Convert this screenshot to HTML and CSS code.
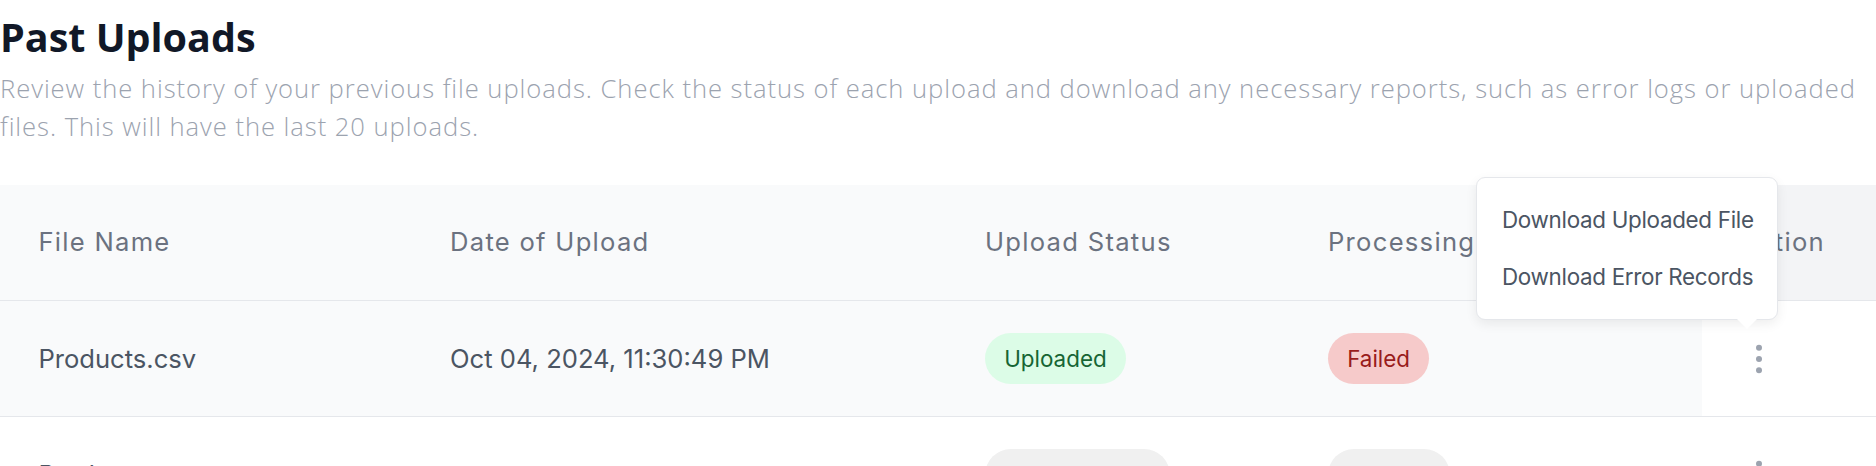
FILE: index.html
```html
<!DOCTYPE html>
<html lang="en">

<head>
    <meta charset="UTF-8">
    <meta name="viewport" content="width=device-width, initial-scale=1.0">
    <title>Past Uploads</title>
    <link rel="stylesheet" href="styles.css">
</head>

<body>
    <div class="uploads">
        <h1 class="uploads-title">Past Uploads</h1>
        <p class="uploads-desc">Review the history of your previous file uploads. Check the status of each upload and download any necessary reports, such as error logs or uploaded files. This will have the last 20 uploads.</p>

        <table class="uploads-table">
            <colgroup>
                <col class="col-name">
                <col class="col-date">
                <col class="col-upload">
                <col class="col-process">
                <col class="col-action">
            </colgroup>
            <thead>
                <tr>
                    <th>File Name</th>
                    <th>Date of Upload</th>
                    <th>Upload Status</th>
                    <th>Processing Status</th>
                    <th class="action-cell">Action</th>
                </tr>
            </thead>
            <tbody>
                <tr class="row-active">
                    <td>Products.csv</td>
                    <td>Oct 04, 2024, 11:30:49 PM</td>
                    <td><span class="pill pill-success">Uploaded</span></td>
                    <td><span class="pill pill-failed">Failed</span></td>
                    <td class="action-cell">
                        <button class="kebab" type="button" aria-label="More actions">
                            <svg width="12" height="36" viewBox="0 0 12 36">
                                <circle cx="6" cy="6.7" r="3" />
                                <circle cx="6" cy="18" r="3" />
                                <circle cx="6" cy="29.3" r="3" />
                            </svg>
                        </button>
                        <div class="menu">
                            <div class="menu-item">Download Uploaded File</div>
                            <div class="menu-item">Download Error Records</div>
                        </div>
                    </td>
                </tr>
                <tr>
                    <td>Products.csv</td>
                    <td></td>
                    <td><span class="pill pill-muted">Not Uploaded</span></td>
                    <td><span class="pill pill-muted">Queued</span></td>
                    <td class="action-cell">
                        <button class="kebab" type="button" aria-label="More actions">
                            <svg width="12" height="36" viewBox="0 0 12 36">
                                <circle cx="6" cy="6.7" r="3" />
                                <circle cx="6" cy="18" r="3" />
                                <circle cx="6" cy="29.3" r="3" />
                            </svg>
                        </button>
                    </td>
                </tr>
            </tbody>
        </table>
    </div>
</body>

</html>
```

FILE: styles.css
```css
body {
    margin: 0;
    font-family: Inter, "Noto Sans", sans-serif;
    background: #fff;
}

.uploads {
    padding-top: 9px;
}

.uploads-title {
    margin: 0;
    font-family: "Open Sans", sans-serif;
    font-size: 39.5px;
    font-weight: 700;
    line-height: 56px;
    color: #111827;
}

.uploads-desc {
    margin: 5px 0 40px;
    font-family: "Open Sans", sans-serif;
    font-size: 25.6px;
    font-weight: 300;
    line-height: 37.5px;
    letter-spacing: 0.95px;
    color: #9ca3af;
}

.uploads-table {
    width: 100%;
    border-collapse: collapse;
    table-layout: fixed;
}

.col-name { width: 411.6px; }
.col-date { width: 535px; }
.col-upload { width: 343px; }
.col-process { width: 412px; }

.uploads-table th {
    padding: 38.4px;
    font-size: 25.6px;
    font-weight: 400;
    line-height: 38.4px;
    letter-spacing: 1.28px;
    color: #6b7280;
    text-align: left;
    white-space: nowrap;
    overflow: hidden;
    background: #f9fafb;
    border-bottom: 1px solid #e5e7eb;
}

.uploads-table th.action-cell {
    background: #f3f4f6;
}

.uploads-table td {
    padding: 32px 38.4px;
    font-size: 25.6px;
    line-height: 38.4px;
    color: #4b5563;
    white-space: nowrap;
    border-bottom: 1px solid #e5e7eb;
}

.row-active td {
    background: #f9fafb;
}

.uploads-table td.action-cell {
    position: relative;
    background: #fff;
}

.pill {
    display: inline-block;
    padding: 9.6px 19.2px;
    border-radius: 9999px;
    font-size: 22.4px;
    line-height: 32px;
    vertical-align: middle;
}

.pill-success {
    background: #dcfce7;
    color: #166534;
}

.pill-failed {
    background: #f6caca;
    color: #991b1b;
}

.pill-muted {
    background: #f0f0f0;
    color: #374151;
}

.kebab {
    display: flex;
    justify-content: center;
    align-items: center;
    width: 38.4px;
    height: 38.4px;
    padding: 0;
    border: 0;
    background: none;
    fill: #9ca3af;
    vertical-align: middle;
}

.menu {
    position: absolute;
    top: -124.2px;
    right: 98px;
    width: 300px;
    padding: 12.8px 0;
    background: #fff;
    border: 1px solid #e5e7eb;
    border-radius: 9px;
    box-shadow: 0 4px 12px rgba(0, 0, 0, 0.07);
    z-index: 2;
}

.menu::after {
    content: "";
    position: absolute;
    left: 260px;
    bottom: -10px;
    border-left: 10px solid transparent;
    border-right: 10px solid transparent;
    border-top: 10px solid #fff;
}

.menu-item {
    padding: 12.8px 25px;
    font-size: 22.4px;
    line-height: 32px;
    letter-spacing: -0.3px;
    color: #4b5563;
    white-space: nowrap;
}
```
